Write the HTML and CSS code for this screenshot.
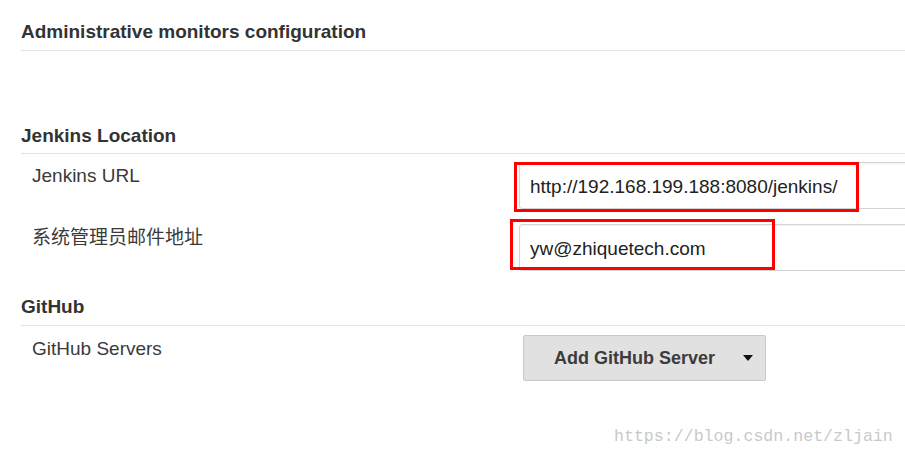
FILE: index.html
```html
<!DOCTYPE html>
<html lang="en">
<head>
  <meta charset="utf-8" />
  <title>Configure System – Jenkins</title>
  <link rel="stylesheet" href="styles.css">
</head>
<body>
  <div class="page">
    <h2 class="section-title first">Administrative monitors configuration</h2>

    <h2 class="section-title gap-lg">Jenkins Location</h2>
    <div class="row">
      <div class="label">Jenkins URL</div>
      <div class="field">
        <input class="text-input" type="text" value="http://192.168.199.188:8080/jenkins/">
        <span class="mark mark-url"></span>
      </div>
    </div>
    <div class="row row-second">
      <div class="label">系统管理员邮件地址</div>
      <div class="field">
        <input class="text-input" type="text" value="yw@zhiquetech.com">
        <span class="mark mark-mail"></span>
      </div>
    </div>

    <h2 class="section-title gap-md">GitHub</h2>
    <div class="row row-btn">
      <div class="label">GitHub Servers</div>
      <div class="field">
        <button class="btn">Add GitHub Server <span class="caret"></span></button>
      </div>
    </div>
  </div>

  <div class="watermark">https://blog.csdn.net/zljain</div>
</body>
</html>
```

FILE: styles.css
```css
html, body {
  margin: 0;
  height: 100%;
  overflow: hidden;
  background: #fff;
}
body {
  font-family: "Liberation Sans", Arial, "Noto Sans CJK SC", sans-serif;
  color: #333;
  position: relative;
}
.page {
  padding-left: 21px;
}
.section-title {
  margin: 0;
  font-size: 19px;
  line-height: 24px;
  font-weight: bold;
  color: #333;
  padding-bottom: 6px;
  border-bottom: 1px solid #e2e2e2;
}
.section-title.first {
  margin-top: 20px;
}
.gap-lg {
  margin-top: 73px;
  padding-bottom: 5px;
}
.gap-md {
  margin-top: 24px;
}
.row {
  display: flex;
  align-items: flex-start;
  margin-top: 8px;
}
.row-second {
  margin-top: 15px;
}
.row-btn {
  margin-top: 9px;
}
.label {
  width: 487px;
  padding-left: 11px;
  padding-top: 2px;
  font-size: 19px;
  line-height: 24px;
  color: #3a3a3a;
}
.field {
  flex: 1;
  position: relative;
}
.text-input {
  display: block;
  box-sizing: border-box;
  width: calc(100% + 10px);
  height: 47px;
  margin: 0;
  padding: 3px 10px 0;
  font-family: "Liberation Sans", Arial, sans-serif;
  font-size: 19px;
  color: #222;
  background: #fff;
  border: 1px solid #d4d4d4;
  border-radius: 3px;
  box-shadow: inset 0 1px 2px rgba(0,0,0,0.06);
  outline: none;
}
.mark {
  position: absolute;
  border: 3px solid #f00;
  box-sizing: border-box;
  pointer-events: none;
}
.mark-url {
  left: -5px;
  top: 0;
  width: 345px;
  height: 50px;
}
.mark-mail {
  left: -9px;
  top: -5px;
  width: 265px;
  height: 51px;
}
.btn {
  display: flex;
  align-items: center;
  box-sizing: border-box;
  width: 243px;
  height: 46px;
  margin-left: 4px;
  padding: 0 0 0 30px;
  font-family: "Liberation Sans", Arial, sans-serif;
  font-size: 18px;
  font-weight: bold;
  color: #3c3c3c;
  background: #e1e1e1;
  border: 1px solid #c9c9c9;
  border-radius: 2px;
}
.caret {
  width: 0;
  height: 0;
  margin-left: 28px;
  border-left: 5px solid transparent;
  border-right: 5px solid transparent;
  border-top: 6px solid #111;
}
.watermark {
  position: absolute;
  left: 614px;
  top: 427px;
  font-family: "Liberation Mono", monospace;
  font-size: 16.6px;
  color: #c9c9c9;
  white-space: nowrap;
}
```
